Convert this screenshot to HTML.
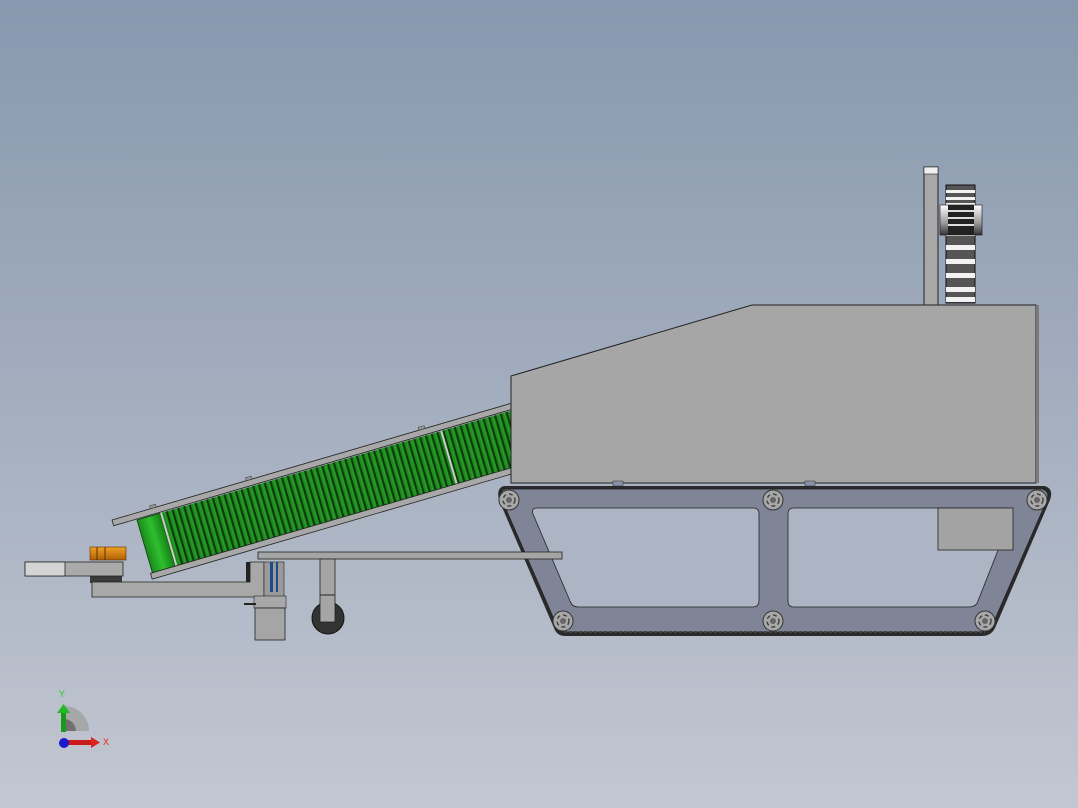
<!DOCTYPE html>
<html><head><meta charset="utf-8"><style>
html,body{margin:0;padding:0;width:1078px;height:808px;overflow:hidden}
svg{display:block}
text{font-family:"Liberation Sans",sans-serif}
</style></head><body>
<svg width="1078" height="808" viewBox="0 0 1078 808" xmlns="http://www.w3.org/2000/svg">
<defs>
<linearGradient id="bg" x1="0" y1="0" x2="0" y2="1">
<stop offset="0" stop-color="#8898ae"/><stop offset="0.5" stop-color="#a3aebf"/><stop offset="1" stop-color="#c3c7d1"/>
</linearGradient>
<pattern id="belt" x="0" y="0" width="6" height="60" patternUnits="userSpaceOnUse">
<rect width="6" height="60" fill="#1e8a1e"/>
<rect x="0" width="2" height="60" fill="#0c3a0c"/>
<rect x="4" width="1" height="60" fill="#2aa02a"/>
</pattern>
<linearGradient id="roll" x1="0" y1="0" x2="1" y2="0">
<stop offset="0" stop-color="#1a8a1a"/><stop offset="0.5" stop-color="#2ec02e"/><stop offset="1" stop-color="#168016"/>
</linearGradient>
<linearGradient id="hub" x1="0" y1="0" x2="0" y2="1">
<stop offset="0" stop-color="#fff"/><stop offset="0.6" stop-color="#999"/><stop offset="1" stop-color="#333"/>
</linearGradient>
<linearGradient id="org" x1="0" y1="0" x2="0" y2="1">
<stop offset="0" stop-color="#f0a020"/><stop offset="1" stop-color="#b06008"/>
</linearGradient>
<g id="bolt"><circle r="10" fill="#a8a8a8" stroke="#333" stroke-width="1"/><circle r="6" fill="none" stroke="#444" stroke-width="1.5" stroke-dasharray="4 3"/><circle r="3" fill="#666"/></g>
</defs>
<rect width="1078" height="808" fill="url(#bg)"/>

<!-- conveyor -->
<g transform="translate(112,520) rotate(-16.3)">
<rect x="24" y="7" width="392" height="56" fill="url(#belt)"/>
<rect x="24" y="7" width="24" height="56" fill="url(#roll)" stroke="#0a400a" stroke-width="0.8"/>
<rect x="48" y="7" width="2" height="56" fill="#ccc"/>
<rect x="340" y="7" width="2" height="56" fill="#ccc"/>
<rect x="0" y="0" width="416" height="6" fill="#a8a8a8" stroke="#222" stroke-width="0.8"/>
<rect x="22" y="62" width="394" height="6" fill="#a8a8a8" stroke="#222" stroke-width="0.8"/>
<rect x="40" y="-3" width="6" height="3" fill="#999" stroke="#333" stroke-width="0.5"/>
<rect x="140" y="-3" width="6" height="3" fill="#999" stroke="#333" stroke-width="0.5"/>
<rect x="320" y="-3" width="6" height="3" fill="#999" stroke="#333" stroke-width="0.5"/>
</g>

<!-- left parts -->
<rect x="90" y="576" width="32" height="7" fill="#3a3a3a"/>
<rect x="25" y="562" width="98" height="14" fill="#aaa" stroke="#222" stroke-width="0.8"/>
<rect x="25" y="562" width="40" height="14" fill="#d4d4d4" stroke="#222" stroke-width="0.8"/>
<rect x="90" y="547" width="36" height="13" fill="url(#org)" stroke="#5a3000" stroke-width="0.6"/>
<line x1="97" y1="547" x2="97" y2="560" stroke="#5a3000"/><line x1="105" y1="547" x2="105" y2="560" stroke="#5a3000"/>
<path d="M92 582 L250 582 L250 562 L264 562 L264 597 L92 597 Z" fill="#a8a8a8" stroke="#222" stroke-width="0.8"/>
<rect x="246" y="562" width="4" height="20" fill="#222"/>
<rect x="264" y="562" width="20" height="36" fill="#9a9a9a" stroke="#222" stroke-width="0.6"/>
<rect x="270" y="562" width="3" height="30" fill="#1a4a8a"/><rect x="276" y="562" width="2" height="30" fill="#1a4a8a"/>
<rect x="254" y="596" width="32" height="12" fill="#a8a8a8" stroke="#222" stroke-width="0.6"/>
<rect x="244" y="603" width="12" height="2" fill="#222"/>
<rect x="255" y="608" width="30" height="32" fill="#a5a5a5" stroke="#222" stroke-width="0.8"/>

<!-- main body -->
<path d="M511 376 L752 305 L1036 305 L1036 483 L511 483 Z" fill="#a6a6a6" stroke="#222" stroke-width="1"/>
<rect x="1036" y="305" width="3" height="178" fill="#7a7a7a"/>
<rect x="613" y="481" width="10" height="5" fill="#8890a8" stroke="#333" stroke-width="0.5"/>
<rect x="805" y="481" width="10" height="5" fill="#8890a8" stroke="#333" stroke-width="0.5"/>

<!-- gear assembly -->
<rect x="924" y="167" width="14" height="138" fill="#a8a8a8" stroke="#222"/>
<rect x="924" y="167" width="14" height="7" fill="#f0f0f0" stroke="#222" stroke-width="0.6"/>
<rect x="946" y="185" width="29" height="118" fill="#555" stroke="#111"/>
<g fill="#f2f2f2">
<rect x="946" y="190" width="29" height="3"/><rect x="946" y="197" width="29" height="3"/><rect x="946" y="203" width="29" height="4"/>
<rect x="946" y="231" width="29" height="5"/><rect x="946" y="245" width="29" height="5"/><rect x="946" y="259" width="29" height="5"/>
<rect x="946" y="273" width="29" height="5"/><rect x="946" y="287" width="29" height="5"/><rect x="946" y="297" width="29" height="5"/>
</g>
<rect x="940" y="205" width="42" height="30" fill="url(#hub)" stroke="#111" stroke-width="0.6"/>
<rect x="948" y="205" width="26" height="30" fill="#222"/>
<g fill="#ddd"><rect x="948" y="210" width="26" height="2"/><rect x="948" y="217" width="26" height="2"/><rect x="948" y="224" width="26" height="2"/></g>

<!-- track frame -->
<path d="M504 486 L1044 486 Q1054 488 1050 500 L995 628 Q991 636 982 636 L565 636 Q557 636 554 628 L499 500 Q496 488 504 486 Z" fill="#2a2a2a"/>
<path d="M506 489 L1042 489 Q1050 491 1047 500 L992 626 Q988 632 980 632 L568 632 Q560 632 557 626 L502 500 Q499 490 506 489 Z" fill="#7f8497" stroke="#222" stroke-width="0.8"/>
<path d="M537 508 L753 508 Q759 508 759 514 L759 600 Q759 607 753 607 L578 607 Q572 607 570 601 L533 514 Q531 508 537 508 Z" fill="#adb5c4" stroke="#222" stroke-width="0.8"/>
<path d="M794 508 L1008 508 Q1015 508 1012 515 L978 601 Q976 607 969 607 L794 607 Q788 607 788 601 L788 514 Q788 508 794 508 Z" fill="#adb5c4" stroke="#222" stroke-width="0.8"/>
<rect x="938" y="508" width="75" height="42" fill="#a3a3a3" stroke="#222" stroke-width="0.8"/>
<line x1="564" y1="632" x2="985" y2="632" stroke="#444" stroke-width="2" stroke-dasharray="3 2"/>
<use href="#bolt" x="509" y="500"/><use href="#bolt" x="773" y="500"/><use href="#bolt" x="1037" y="500"/>
<use href="#bolt" x="563" y="621"/><use href="#bolt" x="773" y="621"/><use href="#bolt" x="985" y="621"/>

<!-- support rod & wheel (in front) -->
<rect x="258" y="552" width="304" height="7" fill="#a5a5a5" stroke="#222" stroke-width="0.8"/>
<circle cx="328" cy="618" r="16" fill="#333" stroke="#111"/>
<rect x="320" y="559" width="15" height="63" fill="#a5a5a5" stroke="#222" stroke-width="0.8"/>
<line x1="320" y1="595" x2="335" y2="595" stroke="#222"/>

<!-- axes triad -->
<path d="M64 706 A25 25 0 0 1 89 731 L64 731 Z" fill="#a0a0a0" opacity="0.8"/>
<path d="M64 719 A12 12 0 0 1 76 731 L64 731 Z" fill="#707070"/>
<rect x="61" y="712" width="5" height="20" fill="#1a9a1a"/>
<path d="M57 713 L63.5 704 L70 713 Z" fill="#22bb22"/>
<rect x="64" y="740" width="28" height="5" fill="#cc1a1a"/>
<path d="M91 737 L100 742.5 L91 748 Z" fill="#dd2222"/>
<circle cx="64" cy="743" r="5" fill="#1a1acc"/>
<text x="59" y="697" font-size="9" fill="#22cc22">Y</text>
<text x="103" y="745" font-size="9" fill="#ee2222">X</text>
</svg>
</body></html>
